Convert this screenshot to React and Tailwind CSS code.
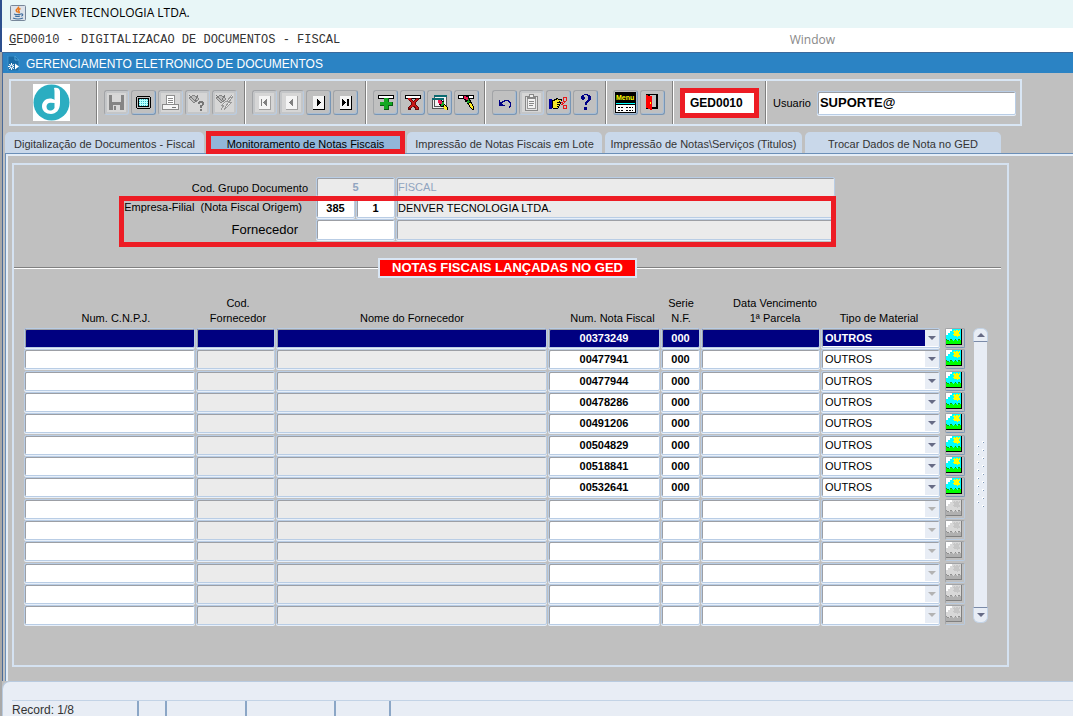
import React from 'react';
import clsx from 'clsx';

const notas = ['00373249', '00477941', '00477944', '00478286', '00491206', '00504829', '00518841', '00532641'];
const rows = Array.from({ length: 14 }, (_, i) => notas[i] || '');

const field =
  'block w-full min-w-0 rounded-[2px] border border-[#b9cde5] shadow-[inset_1px_1px_0_#9c9fa5,0_1px_0_#e8f0fa] outline-none';

function JavaIcon() {
  return (
    <svg width="16" height="16" viewBox="0 0 16 16">
      <rect x="0.5" y="0.5" width="15" height="15" rx="1" fill="#dde3ea" stroke="#77879a" />
      <path d="M8.5 1.5c1 2-2.800 2.500-2.300 4 .3.900 1.300 1.300 1.500 2M10.500 3.500c-2 1-2.500 1.800-1.500 3 .5.600.2 1.200-.5 1.600" fill="none" stroke="#e8761c" strokeWidth="1.500" />
      <path d="M4 9c2 .8 5 .8 7 0M5 11c1.500.6 3.500.6 5 0M3 13c3 1.200 7 1.200 10 0M11 9c2-.5 2.500 1.500.3 2.200" fill="none" stroke="#3f6e9e" strokeWidth="1.200" />
    </svg>
  );
}

function FormIcon() {
  return (
    <svg width="13" height="15" viewBox="0 0 13 15">
      <path d="M1 0h7l4 4v11H1z" fill="#1a6ba6" stroke="#3f98d0" strokeWidth="0.800" />
      <path d="M8 0v4h4" fill="none" stroke="#4ea5da" />
      <path d="M4.500 7v7M1 10.500h6M2.200 8l4.600 5M6.800 8l-4.600 5" stroke="#fff" />
      <circle cx="4.500" cy="10.500" r="2" fill="#fff" />
      <circle cx="4.500" cy="10.500" r="1" fill="#1a6ba6" />
      <path d="M8 7.500l4 3-4 3z" fill="#fff" />
    </svg>
  );
}

function Logo() {
  return (
    <svg width="37" height="37" viewBox="0 0 37 37" role="img" aria-label="Denver">
      <path d="M0 0h37v37H0z" fill="#fff" />
      <circle cx="18.500" cy="18.500" r="18" fill="#2badc1" />
      <path d="M21 4c3-1 6 .5 6 3.500V19c0 7-4 11-9 11s-9-3-9-7.500 3.500-8 8-8c1.800 0 3.500.5 4.500 1.500V8c0-1.500-.1-2.500-.5-4z" fill="#fff" />
      <path d="M21.500 19v5c-1 2-3 2.500-4.500 2.500-2 0-3.500-1.500-3.500-3.700 0-2.500 1.800-4 4-4z" fill="#2badc1" />
    </svg>
  );
}

function Pix({ children }) {
  return (
    <svg width="19" height="19" viewBox="0 0 19 19" shapeRendering="crispEdges">
      {children}
    </svg>
  );
}

function Nav({ d, off }) {
  return (
    <Pix>
      <path d="M4 3h11v13H4z" fill="#f4f4f4" />
      <path d="M15.500 3v13.500H4" fill="none" stroke={off ? '#a0a0a0' : '#000'} />
      <path d={d} fill={off ? '#808080' : '#000'} />
    </Pix>
  );
}

const funnel = 'M1 5l5-3 5 4-5 4z';

const icons = {
  save: (
    <Pix>
      <path d="M2 2h15v15H2z" fill="#858585" />
      <path d="M5 2h9v7H5zM6 12h7v5H6z" fill="#d8d8d8" />
      <path d="M7 13h2v4H7zM15 3h1v1h-1z" fill="#858585" />
    </Pix>
  ),
  screen: (
    <Pix>
      <path d="M3 3h13v1h1v11h-1v1H3v-1H2V4h1z" fill="#000" />
      <path d="M3 4h13v11H3z" fill="#c0c0c0" />
      <path d="M4 5h11v9H4z" fill="#000" />
      <path d="M5 6h9v7H5z" fill="#b8ffff" />
      <path d="M5 6.500h9M5 8.500h9M5 10.500h9M5 12.500h9" stroke="#35bdc9" strokeDasharray="1 1" />
    </Pix>
  ),
  print: (
    <Pix>
      <path d="M5.500 2.500h8v9h-8z" fill="#fff" stroke="#909090" />
      <path d="M7 5.500h5M7 7.500h5M7 9.500h5" stroke="#8a8a8a" />
      <path d="M1.500 11.500h16v5h-16z" fill="#f5f5f5" stroke="#8a8a8a" />
      <path d="M11 14h4v1h-4z" fill="#777" />
    </Pix>
  ),
  query: (
    <Pix>
      <path d={funnel} fill="#bdbdbd" stroke="#858585" />
      <path d="M1 2l7 7M10 2l-3 6" stroke="#777" />
      <path d="M10 11V9h1V8h4v1h1v3h-1v1h-1v2h-2v-3h2v-2h-2v1zM12 16h2v2h-2z" fill="#777" />
    </Pix>
  ),
  execute: (
    <Pix>
      <path d={funnel} fill="#bdbdbd" stroke="#858585" />
      <path d="M1 2l7 7M10 2l-3 5" stroke="#777" />
      <path d="M17 2l-5 6h2l-5 9 8-8h-3l4-6M11 8l-4 4h2l-3 5" fill="#e6e6e6" stroke="#999" />
    </Pix>
  ),
  first: <Nav off d="M6 6h1v7H6zM12 6v7h-1v-1h-1v-1H9v-1H8V9h1V8h1V7h1V6z" />,
  prev: <Nav off d="M11 6v7h-1v-1H9v-1H8v-1H7V9h1V8h1V7h1V6z" />,
  next: <Nav d="M8 6v7h1v-1h1v-1h1v-1h1V9h-1V8h-1V7H9V6z" />,
  last: <Nav d="M6 6v7h1v-1h1v-1h1v-1h1V9H9V8H8V7H7V6zM11 6h2v7h-2z" />,
  insert: (
    <Pix>
      <path d="M2.500 2.500h15v3h-15z" fill="#fff" stroke="#000" />
      <path d="M8 5h5v4h4v4h-4v4H8v-4H4V9h4z" fill="#075c12" />
      <path d="M8 5h4v4h4v3h-4v4H8v-4H4V9h4z" fill="#12a822" />
    </Pix>
  ),
  remove: (
    <Pix>
      <path d="M2.500 2.500h15v3h-15z" fill="#fff" stroke="#000" />
      <path d="M5 5h4v2h1v1h1V7h1V6h1V5h3v2h-1v1h-1v1h-1v3h1v1h1v1h1v3h-4v-2h-1v-1h-2v1H8v2H5v-3h1v-1h1v-1h1V9H7V8H6V7H5z" fill="#640808" />
      <path d="M5 5h3v2h1v1h1v1h1V8h1V7h1V6h2v1h-1v1h-1v1h-1v3h1v1h1v1h1v2h-2v-2h-1v-1h-2v1H8v1H6v-1h1v-1h1v-1h1V9H8V8H7V7H5z" fill="#c81616" />
    </Pix>
  ),
  clearForm: (
    <Pix>
      <path d="M4.500 2.500h12v11h-12zM2.500 5.500h11v10h-11z" fill="#f2f2f2" stroke="#555" />
      <path d="M4 2h13v2H4zM2 5h12v2H2z" fill="#0b6a70" />
      <path d="M8 7h4v1h2v3h1v1h1v1h1v1h1v3h-3v-1h-1v-1h-1v-1h-2v-1h-1v-1H9v-2H8z" fill="#000" />
      <path d="M8 7h3v1h1v3H9v-1H8z" fill="#ed1651" />
      <path d="M12 9h2v3h-1v1h-2v-2h1z" fill="#18a627" />
      <path d="M14 12h1v1h1v1h1v3h-2v-1h-1v-1h-1v-1h1z" fill="#ffec22" />
    </Pix>
  ),
  clear: (
    <Pix>
      <path d="M1.500 2.500h15v3h-15z" fill="#fff" stroke="#000" />
      <path d="M6 2h4v1h2v2h1v2h1v2h1v2h1v2h1v4h-2v-1h-1v-1h-1v-1h-1v-2h-1v-1h-1V9H8V7H7V6H6z" fill="#000" />
      <path d="M7 3h2v1h2v3H9V6H7z" fill="#ed1651" />
      <path d="M11 6h1v2h1v1h-1v1h-2V8h1z" fill="#18a627" />
      <path d="M12 10h2v1h1v2h1v3h-1v-1h-1v-1h-1v-2h-1z" fill="#ffec22" />
    </Pix>
  ),
  undo: (
    <Pix>
      <path d="M4 7v6h6v-1H8v-1H7v-1h1V9h2V8h3v1h1v1h1v3h-1v2h1v-1h1V9h-1V8h-1V7H9v1H7v1H5V7z" fill="#000085" />
    </Pix>
  ),
  clipboard: (
    <Pix>
      <path d="M3.500 3.500h12v14h-12z" fill="#e4e4e4" stroke="#888" />
      <path d="M5.500 5.500h8v10h-8z" fill="#f2f2f2" stroke="#999" />
      <path d="M7 1h5v2h2v3H5V3h2z" fill="#888" />
      <path d="M8 2h3v2H8z" fill="#eee" />
      <path d="M7 8.500h5M7 10.500h5M7 12.500h4" stroke="#888" />
    </Pix>
  ),
  cut: (
    <Pix>
      <path d="M0 6h3v10H0z" fill="#0000a0" />
      <path d="M3 7h2V6h2V5h2v1h4v2h-2v1h1v2h-1v2h-1v2H9v1H4v-1H3z" fill="#000" />
      <path d="M4 8h2V7h2V6h1v1h3v1h-2v1H8v1h3v1H8v1h2v1H8v1h1v1H4z" fill="#f5e62a" />
      <path d="M12 9h2v1h1v1h-1v1h-2v-1h1v-1h-1z" fill="#e81919" />
      <path d="M14.500 4.500h3v3l-2 2-1-2zM14.500 12.500h3v3h-3z" fill="none" stroke="#e81919" />
    </Pix>
  ),
  help: (
    <Pix>
      <path d="M5 6V3h1V2h2V1h4v1h2v1h1v4h-1v1h-1v1h-1v1h-1v2H9V9h1V8h1V7h1V3h-1V2H8v2h1v2H8v1H6V6zM8 14h3v3H8z" fill="#000085" />
    </Pix>
  ),
  exit: (
    <Pix>
      <path d="M3 1h12v15H3z" fill="#000" />
      <path d="M7 2h6v12H7z" fill="#c0c0c0" />
      <path d="M3 2h2v1h4v14H7v-1H5v-1H3z" fill="#f00" />
      <path d="M7 9h1v2H7z" fill="#ff0" />
    </Pix>
  ),
  menu: (
    <svg width="21" height="21" viewBox="0 0 21 21" shapeRendering="crispEdges">
      <path d="M0 0h21v21H0z" fill="#000" />
      <text x="1" y="8" fontSize="7" fontWeight="bold" fontFamily="Liberation Sans, sans-serif" fill="#ff0">Menu</text>
      <path d="M1 11h19v1H1z" fill="#0ff" />
      <path d="M1 13h19v7H1z" fill="#fff" />
      <path d="M3 15.500h6M11 15.500h7M3 18.500h6M11 18.500h7" stroke="#000" strokeDasharray="2 1" />
    </svg>
  ),
};

function ToolButton({ icon, label, off }) {
  return (
    <button
      type="button"
      aria-label={label}
      disabled={off}
      className={clsx(
        'flex size-[25px] shrink-0 items-center justify-center rounded-[3px] border border-t-[#a2a4a7] border-l-[#a2a4a7]',
        off
          ? 'border-r-[#b9cbe0] border-b-[#b9cbe0] bg-[#d6d6d6] shadow-[inset_0_0_0_2px_#c4c6c8]'
          : 'border-r-[#7896b6] border-b-[#7896b6] bg-[#c0c0c0] shadow-[inset_-1px_-1px_0_#a9bdd3]'
      )}
    >
      {icons[icon]}
    </button>
  );
}

function Group({ className, children }) {
  return (
    <div
      className={clsx(
        'flex shrink-0 items-center gap-0.5 border-r border-r-[#808080] pl-[7px] shadow-[1px_0_0_#fff]',
        className
      )}
    >
      {children}
    </div>
  );
}

function Toolbar() {
  return (
    <div className="mt-1.5 mr-[51px] ml-1.5 flex h-[47px] border-2 border-[#d9e6f4]">
      <Group className="w-[86px] pl-[22px]">
        <Logo />
      </Group>
      <Group className="w-[148px]">
        <ToolButton icon="save" label="Salvar" off />
        <ToolButton icon="screen" label="Tela" />
        <ToolButton icon="print" label="Imprimir" off />
        <ToolButton icon="query" label="Consultar" off />
        <ToolButton icon="execute" label="Executar consulta" off />
      </Group>
      <Group className="w-[121px]">
        <ToolButton icon="first" label="Primeiro" off />
        <ToolButton icon="prev" label="Anterior" off />
        <ToolButton icon="next" label="Próximo" />
        <ToolButton icon="last" label="Último" />
      </Group>
      <Group className="w-[119px]">
        <ToolButton icon="insert" label="Inserir" />
        <ToolButton icon="remove" label="Remover" />
        <ToolButton icon="clearForm" label="Limpar tela" />
        <ToolButton icon="clear" label="Limpar registro" />
      </Group>
      <Group className="w-[121px]">
        <ToolButton icon="undo" label="Desfazer" />
        <ToolButton icon="clipboard" label="Colar" off />
        <ToolButton icon="cut" label="Recortar" />
        <ToolButton icon="help" label="Ajuda" />
      </Group>
      <Group className="w-[67px]">
        <ToolButton icon="menu" label="Menu" />
        <ToolButton icon="exit" label="Sair" />
      </Group>
      <Group className="w-[93px]">
        <input
          aria-label="Programa"
          defaultValue="GED0010"
          className="h-[30px] w-[79px] border-[5px] border-[#ed1c24] bg-white pl-[5px] text-[12px] font-bold outline-none"
        />
      </Group>
      <label htmlFor="usuario" className="flex items-center pr-1.5 pl-[7px]">
        Usuario
      </label>
      <div className="flex flex-1 items-center pr-1">
        <input id="usuario" defaultValue="SUPORTE@" className={clsx(field, 'h-6 bg-white px-0.5 text-[13px] font-bold')} />
      </div>
    </div>
  );
}

const tabs = [
  { title: 'Digitalização de Documentos - Fiscal', width: 'w-[199px]' },
  { title: 'Monitoramento de Notas Fiscais', width: 'w-[197px]' },
  { title: 'Impressão de Notas Fiscais em Lote', width: 'w-[195px]' },
  { title: 'Impressão de Notas\\Serviços (Titulos)', width: 'w-[197px]' },
  { title: 'Trocar Dados de Nota no GED', width: 'w-[196px]' },
];

function Tabs() {
  return (
    <div role="tablist" className="mt-[6px] ml-0.5 flex h-[21px] gap-[3px]">
      {tabs.map((t, i) => (
        <button
          key={t.title}
          type="button"
          role="tab"
          aria-selected={i === 1}
          className={clsx(
            'pt-0.5 whitespace-nowrap',
            t.width,
            i === 1
              ? 'z-10 bg-[#92b6d9] text-black outline-[5px] outline-offset-[-4px] outline-[#ed1c24]'
              : 'rounded-t-[5px] bg-[#c9d8ea] text-[#333]'
          )}
        >
          {t.title}
        </button>
      ))}
    </div>
  );
}

function Header() {
  return (
    <div className="relative mr-[172px] grid grid-cols-[302px_39px_1px_39px_1px_minmax(0,1fr)] auto-rows-[21px]">
      <label htmlFor="grupo" className="self-center pr-2 text-right">Cod. Grupo Documento</label>
      <input id="grupo" readOnly defaultValue="5" className={clsx(field, 'col-span-3 h-5 bg-[#ebebeb] text-center font-bold text-[#90a4c0]')} />
      <span />
      <input aria-label="Nome do grupo" readOnly defaultValue="FISCAL" className={clsx(field, 'h-5 bg-[#ebebeb] px-px text-[#90a4c0]')} />

      <label htmlFor="empresa" className="pt-0.5 pr-3.5 text-right whitespace-pre">Empresa-Filial  (Nota Fiscal Origem)</label>
      <input id="empresa" defaultValue="385" className={clsx(field, 'h-5 bg-white text-center font-bold')} />
      <span />
      <input aria-label="Filial" defaultValue="1" className={clsx(field, 'h-5 bg-white text-center font-bold')} />
      <span />
      <input aria-label="Nome da empresa" readOnly defaultValue="DENVER TECNOLOGIA LTDA." className={clsx(field, 'h-5 bg-[#ebebeb] px-px')} />

      <label htmlFor="fornecedor" className="self-center pr-[18px] text-right text-[13px]">Fornecedor</label>
      <input id="fornecedor" className={clsx(field, 'col-span-3 h-[21px] bg-white')} />
      <span />
      <input aria-label="Nome do fornecedor" readOnly className={clsx(field, 'h-[21px] bg-[#ebebeb]')} />

      <div className="pointer-events-none absolute top-[19px] -right-px -bottom-[7px] left-[105px] border-[5px] border-[#ed1c24]" />
    </div>
  );
}

function Landscape({ off }) {
  return (
    <svg width="16" height="16" viewBox="0 0 16 16" shapeRendering="crispEdges">
      <path d="M0 0h16v16H0z" fill={off ? '#808080' : '#000'} />
      <path d="M0 0h15v15H0z" fill={off ? '#d8d8d8' : '#0ff'} />
      <path d="M0 0h6v2H4v2H2v2H0z" fill="#fff" />
      <path d="M8 1h1v1h1V1h2v1h1V1h1v2h-1v2h1v2h-2v1h-1V7H8V6H7V5h1V3H7V2h1z" fill={off ? '#c6c6c6' : '#ff0'} />
      <path d="M0 12v-2h1v1h2v1h1v-2h2v1h1v1h1v-1h1v-1h1v1h1v1h1v-2h2v1h1v4H0z" fill={off ? '#b0b0b0' : '#0f0'} />
      <path d="M0 10h1v1h2v1H1v-1H0zM4 10h2v1H4zM9 10h1v1H9zM12 10h2v1h-2z" fill={off ? '#909090' : '#08a008'} />
    </svg>
  );
}

function Cell({ label, value = '', active, locked }) {
  return (
    <td className="pr-px">
      <input
        aria-label={label}
        defaultValue={value}
        readOnly={locked}
        className={clsx(
          field,
          'h-5 text-center font-bold',
          active ? 'bg-[#000080] text-white' : locked ? 'bg-[#ebebeb]' : 'bg-white'
        )}
      />
    </td>
  );
}

function NotasTable() {
  return (
    <table className="w-full table-fixed border-collapse">
      <colgroup>
        <col className="w-[172px]" />
        <col className="w-[80px]" />
        <col />
        <col className="w-[113px]" />
        <col className="w-[40px]" />
        <col className="w-[120px]" />
        <col className="w-[124px]" />
        <col className="w-[22px]" />
      </colgroup>
      <thead>
        <tr className="h-[50px] align-bottom leading-[15px] *:pb-0.5 *:font-normal">
          <th className="pl-3">Num. C.N.P.J.</th>
          <th className="pl-1">Cod.<br />Fornecedor</th>
          <th>Nome do Fornecedor</th>
          <th className="pl-4 whitespace-nowrap">Num. Nota Fiscal</th>
          <th>Serie<br />N.F.</th>
          <th className="pl-7 whitespace-nowrap">Data Vencimento<br />1ª Parcela</th>
          <th className="pr-2">Tipo de Material</th>
          <th aria-label="Imagem" />
        </tr>
      </thead>
      <tbody>
        {rows.map((nota, i) => {
          const active = i === 0;
          return (
            <tr key={i} className={i % 3 === 1 ? 'h-[22px] align-top' : 'h-[21px] align-top'}>
              <Cell label="Num. C.N.P.J." active={active} />
              <Cell label="Cod. Fornecedor" active={active} locked />
              <Cell label="Nome do Fornecedor" active={active} locked />
              <Cell label="Num. Nota Fiscal" value={nota} active={active} />
              <Cell label="Serie N.F." value={nota && '000'} active={active} />
              <Cell label="Data Vencimento" active={active} />
              <td className="pr-[5px]">
                <div className={clsx(field, 'relative h-5 bg-white p-px')}>
                  <select
                    aria-label="Tipo de Material"
                    defaultValue={nota ? 'OUTROS' : ''}
                    disabled={!nota}
                    className={clsx(
                      'block h-full w-full appearance-none pl-0.5 outline-none',
                      active && 'bg-[#000080] font-bold text-white'
                    )}
                  >
                    <option value="" />
                    <option>OUTROS</option>
                  </select>
                  <span className="pointer-events-none absolute inset-y-px right-0 flex w-3.5 items-center justify-center bg-[#e8edf5]">
                    <svg width="8" height="4" viewBox="0 0 8 4">
                      <path d="M0 0h8L4 4z" fill={nota ? '#666b85' : '#b3b3b3'} />
                    </svg>
                  </span>
                </div>
              </td>
              <td>
                <button
                  type="button"
                  aria-label="Ver imagem"
                  disabled={!nota}
                  className={clsx(
                    'block rounded-[2px] border border-t-[#a2a4a7] border-l-[#a2a4a7] pr-0.5 pb-0.5',
                    nota ? 'border-r-[#7896b6] border-b-[#7896b6]' : 'border-r-[#b9cbe0] border-b-[#b9cbe0]'
                  )}
                >
                  <Landscape off={!nota} />
                </button>
              </td>
            </tr>
          );
        })}
      </tbody>
    </table>
  );
}

function Scrollbar() {
  const dots = Array.from({ length: 17 }, (_, i) => i);
  return (
    <div className="mt-[50px] mb-1 flex w-[15px] flex-col items-center">
      <button type="button" aria-label="Rolar para cima" className="flex h-3.5 w-[15px] items-center justify-center rounded-t-[6px] border border-[#c3d3e6] border-b-[#7b8ba8] bg-[#e8edf5]">
        <svg width="8" height="4" viewBox="0 0 8 4"><path d="M0 4h8L4 0z" fill="#666b85" /></svg>
      </button>
      <div className="flex w-[13px] flex-1 items-center justify-center bg-[#e8edf5]">
        <svg width="9" height="68" viewBox="0 0 9 68" shapeRendering="crispEdges">
          {dots.map((i) => (
            <g key={i}>
              <rect x={i % 2 ? 1 : 6} y={i * 4} width="2" height="2" fill="#fff" />
              <rect x={i % 2 ? 2 : 7} y={i * 4 + 1} width="1" height="1" fill="#7b96b8" />
            </g>
          ))}
        </svg>
      </div>
      <button type="button" aria-label="Rolar para baixo" className="flex h-4 w-[15px] items-center justify-center rounded-b-[6px] border border-[#c3d3e6] border-t-[#7b8ba8] bg-[#e8edf5]">
        <svg width="8" height="4" viewBox="0 0 8 4"><path d="M0 0h8L4 4z" fill="#666b85" /></svg>
      </button>
    </div>
  );
}

export default function App() {
  return (
    <div className="flex min-h-screen flex-col border-l-2 border-[#a9a9a9] bg-[#c0c0c0] font-['Liberation_Sans',Arial,sans-serif] text-[11px] leading-[14px] text-black">
      <header className="-ml-0.5 flex h-7 items-center gap-[5px] border-l-2 border-[#2d4f8e] bg-[#e8f6f7] pb-0.5 pl-2 font-['Open_Sans','Noto_Sans',sans-serif] text-[12px]">
        <JavaIcon />
        <span>DENVER TECNOLOGIA LTDA.</span>
      </header>
      <nav className="-ml-0.5 flex h-6 items-center justify-between border-l-2 border-[#2d4f8e] bg-white pr-[238px] pl-[7px]">
        <a href="#ged" className="font-['Liberation_Mono',monospace] text-[12px] text-[#333]">
          <u>G</u>ED0010 - DIGITALIZACAO DE DOCUMENTOS - FISCAL
        </a>
        <a href="#window" className="font-['Open_Sans','Noto_Sans',sans-serif] text-[12px] text-[#888]">Window</a>
      </nav>

      <main className="flex flex-1 flex-col border-l border-[#4a6a98]">
        <h1 className="flex h-[21px] items-center gap-1.5 border-t border-[#3b6a9c] bg-[#2b83c4] pt-px pl-1 text-[12px] text-white">
          <FormIcon />
          GERENCIAMENTO ELETRONICO DE DOCUMENTOS
        </h1>
        <Toolbar />
        <Tabs />

        <div className="ml-0.5 flex flex-1 flex-col border-t border-l border-[#6b8fb8] shadow-[inset_2px_2px_0_#e4edf7]">
          <section className="mt-[9px] mr-16 mb-3.5 ml-1.5 flex-1 border-2 border-[#d5e2f1] pt-3">
            <Header />
            <div className="mt-[18px] mr-1.5 flex h-5 items-center">
              <div className="h-0.5 flex-1 border-t border-b border-t-[#808080] border-b-white" />
              <h2 className="border-2 border-[#d9e6f4] bg-[#f00] px-3 text-[13px] leading-4 font-bold text-white">
                NOTAS FISCAIS LANÇADAS NO GED
              </h2>
              <div className="h-0.5 flex-1 border-t border-b border-t-[#808080] border-b-white" />
            </div>
            <div className="mr-[19px] ml-2.5 flex gap-1.5">
              <NotasTable />
              <Scrollbar />
            </div>
          </section>
        </div>
      </main>

      <footer className="h-[35px] overflow-hidden rounded-tl-[8px] border-t border-l border-[#b9cbe0] bg-[#e8edf5] pt-[18px] pl-[9px] text-[#333]">
        <div className="flex h-4 border-t border-[#c3d3e6] text-[12px]">
          <span className="w-[127px] border-r-2 border-[#8ba6c6] pt-0.5">Record: 1/8</span>
          <span className="w-7 border-r-2 border-[#8ba6c6]" />
          <span className="w-20 border-r-2 border-[#8ba6c6]" />
          <span className="w-[89px] border-r-2 border-[#8ba6c6]" />
          <span className="w-[55px] border-r-2 border-[#8ba6c6]" />
        </div>
      </footer>
    </div>
  );
}
